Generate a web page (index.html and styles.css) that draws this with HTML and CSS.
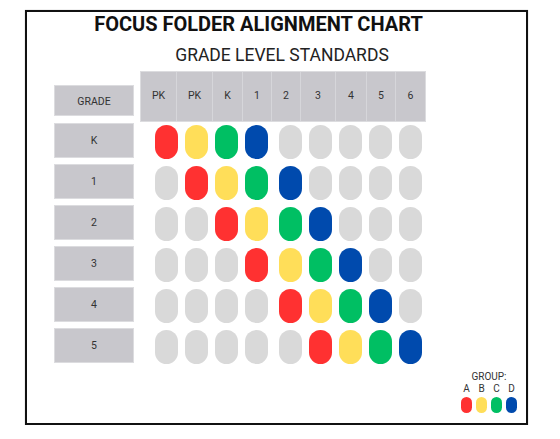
FILE: index.html
```html
<!DOCTYPE html>
<html>
<head>
<meta charset="utf-8">
<link rel="stylesheet" href="styles.css">
</head>
<body>
<div class="frame">
  <h1 class="title">FOCUS FOLDER ALIGNMENT CHART</h1>
  <h2 class="subtitle">GRADE LEVEL STANDARDS</h2>
  <div class="chart">
    <div class="head-row">
      <div class="label head-label">GRADE</div>
      <div class="cols">
        <div class="col">PK</div><div class="col">PK</div><div class="col">K</div>
        <div class="col">1</div><div class="col">2</div><div class="col">3</div>
        <div class="col">4</div><div class="col">5</div><div class="col">6</div>
      </div>
    </div>
    <div class="row">
      <div class="label">K</div>
      <div class="pills"><span class="pill r"></span><span class="pill y"></span><span class="pill g"></span><span class="pill b"></span><span class="pill"></span><span class="pill"></span><span class="pill"></span><span class="pill"></span><span class="pill"></span></div>
    </div>
    <div class="row">
      <div class="label">1</div>
      <div class="pills"><span class="pill"></span><span class="pill r"></span><span class="pill y"></span><span class="pill g"></span><span class="pill b"></span><span class="pill"></span><span class="pill"></span><span class="pill"></span><span class="pill"></span></div>
    </div>
    <div class="row">
      <div class="label">2</div>
      <div class="pills"><span class="pill"></span><span class="pill"></span><span class="pill r"></span><span class="pill y"></span><span class="pill g"></span><span class="pill b"></span><span class="pill"></span><span class="pill"></span><span class="pill"></span></div>
    </div>
    <div class="row">
      <div class="label">3</div>
      <div class="pills"><span class="pill"></span><span class="pill"></span><span class="pill"></span><span class="pill r"></span><span class="pill y"></span><span class="pill g"></span><span class="pill b"></span><span class="pill"></span><span class="pill"></span></div>
    </div>
    <div class="row">
      <div class="label">4</div>
      <div class="pills"><span class="pill"></span><span class="pill"></span><span class="pill"></span><span class="pill"></span><span class="pill r"></span><span class="pill y"></span><span class="pill g"></span><span class="pill b"></span><span class="pill"></span></div>
    </div>
    <div class="row">
      <div class="label">5</div>
      <div class="pills"><span class="pill"></span><span class="pill"></span><span class="pill"></span><span class="pill"></span><span class="pill"></span><span class="pill r"></span><span class="pill y"></span><span class="pill g"></span><span class="pill b"></span></div>
    </div>
  </div>
  <div class="legend">
    <div class="legend-title">GROUP:</div>
    <div class="legend-letters"><span>A</span><span>B</span><span>C</span><span>D</span></div>
    <div class="legend-pills"><span class="mini r"></span><span class="mini y"></span><span class="mini g"></span><span class="mini b"></span></div>
  </div>
</div>
</body>
</html>
```

FILE: styles.css
```css
html, body {
  margin: 0;
  padding: 0;
  background: #ffffff;
}

body {
  font-family: Roboto, "Liberation Sans", Arial, sans-serif;
  color: #333333;
}

.frame {
  margin: 10px 0 0 25px;
  width: 503px;
  height: 415px;
  box-sizing: border-box;
  border: 2px solid #111111;
  box-shadow: 0 0 1px rgba(0, 0, 0, 0.35);
  padding-left: 27px;
  display: flex;
  flex-direction: column;
}

.title {
  margin: 0;
  padding-right: 63px;
  font-size: 20px;
  line-height: 24px;
  font-weight: 700;
  color: #111111;
  text-align: center;
}

.subtitle {
  margin: 12px 0 0 0;
  padding-right: 16px;
  font-size: 17.5px;
  line-height: 14px;
  font-weight: 400;
  color: #222222;
  text-align: center;
}

.chart {
  margin-top: 9px;
  display: flex;
  flex-direction: column;
  gap: 6px;
}

.head-row {
  display: flex;
  gap: 6px;
  height: 51px;
  margin-bottom: -5px;
}

.label {
  width: 80px;
  height: 35px;
  box-sizing: border-box;
  background: #c8c7cc;
  border: 1px solid #dcdcdf;
  display: flex;
  align-items: center;
  justify-content: center;
  font-size: 10.5px;
  color: #333333;
}

.head-label {
  margin-top: 14px;
  height: 31px;
  padding-top: 2px;
}

.cols {
  display: grid;
  grid-template-columns: 35px 36px 30px 29px 29px 35px 31px 29px 30px;
  height: 51px;
  background: #c8c7cc;
  border: 1px solid #dcdcdf;
  box-sizing: border-box;
}

.col {
  display: flex;
  align-items: center;
  justify-content: center;
  font-size: 10.5px;
  color: #333333;
  padding-bottom: 2px;
}

.col + .col {
  border-left: 1px solid #d6d6da;
}

.row {
  display: flex;
  gap: 21px;
  height: 35px;
}

.pills {
  display: flex;
  gap: 7px;
  align-items: flex-start;
}

.pill {
  display: block;
  width: 23px;
  height: 34px;
  margin-top: 2px;
  border-radius: 11.5px;
  background: #d9d9d9;
}

.pills .pill:nth-child(5) {
  margin-left: 4px;
}

.r { background: #ff3131; }
.y { background: #ffde59; }
.g { background: #00bf63; }
.b { background: #004aad; }

.legend {
  align-self: flex-end;
  margin: 8px 9px 0 0;
  display: flex;
  flex-direction: column;
  align-items: center;
  font-size: 10px;
  line-height: 12px;
  color: #333333;
}

.legend-letters,
.legend-pills {
  display: flex;
  gap: 4px;
}

.legend-letters span {
  width: 11px;
  text-align: center;
}

.legend-pills {
  margin-top: 2px;
}

.mini {
  display: block;
  width: 11px;
  height: 16px;
  border-radius: 5.5px;
}
```
